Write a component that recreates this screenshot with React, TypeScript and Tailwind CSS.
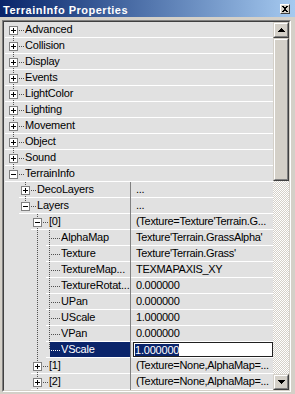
import React from "react";

type Row = {
  label: string;
  level: number;
  box?: "plus" | "minus";
  top: boolean;
  next: boolean;
  anc: number[];
  value?: string;
  selected?: boolean;
};

const SEP = [5, 19, 31, 46];

function leaf(label: string, value: string, next = true, selected = false): Row {
  return { label, level: 3, top: true, next, anc: [2], value, selected };
}

const cats = ["Advanced", "Collision", "Display", "Events", "LightColor", "Lighting", "Movement", "Object", "Sound"];

const rows: Row[] = [
  ...cats.map((c, i): Row => ({ label: c, level: 0, box: "plus", top: i > 0, next: true, anc: [] })),
  { label: "TerrainInfo", level: 0, box: "minus", top: true, next: false, anc: [] },
  { label: "DecoLayers", level: 1, box: "plus", top: true, next: true, anc: [], value: "..." },
  { label: "Layers", level: 1, box: "minus", top: true, next: false, anc: [], value: "..." },
  { label: "[0]", level: 2, box: "minus", top: true, next: true, anc: [], value: "(Texture=Texture'Terrain.G..." },
  leaf("AlphaMap", "Texture'Terrain.GrassAlpha'"),
  leaf("Texture", "Texture'Terrain.Grass'"),
  leaf("TextureMap...", "TEXMAPAXIS_XY"),
  leaf("TextureRotat...", "0.000000"),
  leaf("UPan", "0.000000"),
  leaf("UScale", "1.000000"),
  leaf("VPan", "0.000000"),
  leaf("VScale", "1.000000", false, true),
  { label: "[1]", level: 2, box: "plus", top: true, next: true, anc: [], value: "(Texture=None,AlphaMap=..." },
  { label: "[2]", level: 2, box: "plus", top: true, next: true, anc: [], value: "(Texture=None,AlphaMap=..." },
];

const LINE = "#505050";

function Tree({ r }: { r: Row }) {
  const w = 21 + 12 * r.level;
  const cx = 13 + 12 * r.level - 4;
  const sep = SEP[r.level] - 4;
  return (
    <svg width={w} height={16} className="block shrink-0" shapeRendering="crispEdges">
      <rect x={sep} y={15} width={w - sep} height={1} fill="#ffffff" />
      {r.selected && <rect x={46} y={0} width={w - 46} height={15} fill="#0a246a" />}
      {r.anc.map((l) => (
        <line key={l} x1={13 + 12 * l - 4 + 0.5} y1={0} x2={13 + 12 * l - 4 + 0.5} y2={16} stroke={LINE} strokeDasharray="1 1" />
      ))}
      {r.top && <line x1={cx + 0.5} y1={0} x2={cx + 0.5} y2={8} stroke={LINE} strokeDasharray="1 1" />}
      {r.next && <line x1={cx + 0.5} y1={8} x2={cx + 0.5} y2={16} stroke={LINE} strokeDasharray="1 1" />}
      <line
        x1={r.box ? cx + 6 : cx + 2}
        y1={8.5}
        x2={cx + 11}
        y2={8.5}
        stroke={r.selected ? "#ffffff" : LINE}
        strokeDasharray="1 1"
      />
      {r.box && (
        <>
          <rect x={cx - 4 + 0.5} y={4.5} width={8} height={8} fill="#ffffff" stroke="#808080" />
          <rect x={cx - 2} y={8} width={5} height={1} fill="#000000" />
          {r.box === "plus" && <rect x={cx} y={6} width={1} height={5} fill="#000000" />}
        </>
      )}
    </svg>
  );
}

function RowView({ r }: { r: Row }) {
  const isCat = r.value === undefined;
  return (
    <div className="flex h-[16px]">
      <div className={isCat ? "flex flex-1 min-w-0" : "flex w-[126px] shrink-0"}>
        <Tree r={r} />
        <div
          className={
            r.selected
              ? "flex-1 min-w-0 h-[16px] border-b border-white bg-[#0a246a] text-white leading-[15px] whitespace-nowrap overflow-hidden tracking-[-0.2px]"
              : "flex-1 min-w-0 h-[16px] border-b border-white leading-[15px] whitespace-nowrap overflow-hidden tracking-[-0.2px]"
          }
        >
          {r.label}
        </div>
      </div>
      {!isCat && (
        <>
          <div className="w-px bg-[#808080]" />
          {r.selected ? (
            <div className="flex-1 min-w-0 h-[16px] border-b border-white pl-[2px]">
              <div className="h-[15px] border border-[#202020] bg-white pl-px flex items-center">
                <span className="bg-[#0a246a] text-white leading-[12px] h-[12px] tracking-[-0.2px]">{r.value}</span>
              </div>
            </div>
          ) : (
            <div className="flex-1 min-w-0 h-[16px] border-b border-white pl-[5px] leading-[15px] whitespace-nowrap overflow-hidden tracking-[-0.3px]">
              {r.value}
            </div>
          )}
        </>
      )}
    </div>
  );
}

function Btn3D({ children, className }: { children?: React.ReactNode; className: string }) {
  return (
    <div className={"border border-t-[#d4d0c8] border-l-[#d4d0c8] border-r-[#404040] border-b-[#404040] " + className}>
      <div className="h-full border border-t-white border-l-white border-r-[#808080] border-b-[#808080] bg-[#d4d0c8] flex items-center justify-center">
        {children}
      </div>
    </div>
  );
}

function Arrow({ down }: { down?: boolean }) {
  return (
    <svg width={7} height={4} shapeRendering="crispEdges" className={down ? "block rotate-180" : "block"}>
      <rect x={3} y={0} width={1} height={1} fill="#000" />
      <rect x={2} y={1} width={3} height={1} fill="#000" />
      <rect x={1} y={2} width={5} height={1} fill="#000" />
      <rect x={0} y={3} width={7} height={1} fill="#000" />
    </svg>
  );
}

export default function App() {
  return (
    <div className="w-[295px] h-[394px] bg-[#d4d0c8] flex flex-col overflow-hidden font-['Liberation_Sans',Arial,sans-serif] text-[11px] text-black">
      <div className="h-[17px] shrink-0 flex bg-linear-to-r from-[#0a246a] to-[#a6caf0]">
        <div className="flex-1 pl-[3px] pt-[3px] text-[11px] leading-[14px] font-bold text-white tracking-[0.5px] whitespace-nowrap">
          TerrainInfo Properties
        </div>
        <div className="pt-[4px] pr-[5px]">
          <div className="w-[10px] h-[10px] border border-t-white border-l-white border-r-[#404040] border-b-[#404040] bg-[#d4d0c8] flex items-center justify-center">
            <svg width={6} height={6} shapeRendering="crispEdges" className="block">
              <rect x={0} y={0} width={2} height={1} fill="#000" />
              <rect x={4} y={0} width={2} height={1} fill="#000" />
              <rect x={1} y={1} width={4} height={1} fill="#000" />
              <rect x={2} y={2} width={2} height={2} fill="#000" />
              <rect x={1} y={4} width={4} height={1} fill="#000" />
              <rect x={0} y={5} width={2} height={1} fill="#000" />
              <rect x={4} y={5} width={2} height={1} fill="#000" />
            </svg>
          </div>
        </div>
      </div>
      <div className="h-[3px] shrink-0" />
      <div className="ml-[2px] w-[289px] h-[372px] border border-t-[#808080] border-l-[#808080] border-r-white border-b-white">
        <div className="h-full border border-t-[#404040] border-l-[#404040] border-r-[#d4d0c8] border-b-[#d4d0c8] flex">
          <div className="w-[269px] bg-[#e1e1e1] flex flex-col overflow-hidden">
            {rows.map((r, i) => (
              <RowView key={i} r={r} />
            ))}
          </div>
          <div className="w-[16px] flex flex-col">
            <Btn3D className="h-[16px] shrink-0">
              <Arrow />
            </Btn3D>
            <Btn3D className="h-[143px] shrink-0" />
            <div className="flex-1 bg-[conic-gradient(#d4d0c8_25%,#ffffff_0_50%,#d4d0c8_0_75%,#ffffff_0)] bg-[length:2px_2px]" />
            <Btn3D className="h-[16px] shrink-0">
              <Arrow down />
            </Btn3D>
          </div>
        </div>
      </div>
    </div>
  );
}
